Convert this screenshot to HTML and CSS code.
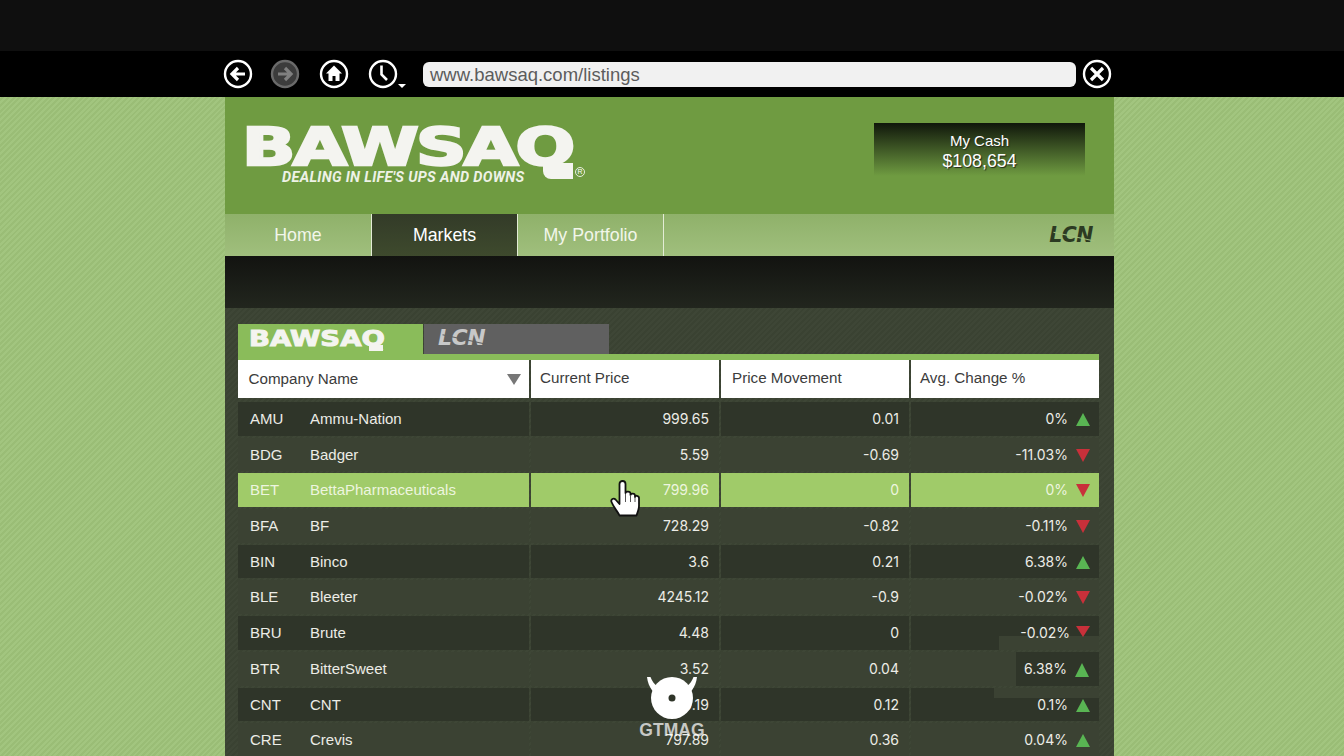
FILE: index.html
```html
<!DOCTYPE html>
<html lang="en">
<head>
    <meta charset="UTF-8">
    <title>BAWSAQ - Listings</title>
    <link rel="stylesheet" href="styles.css">
</head>
<body>
    <div class="top-strip"></div>

    <div class="browser-bar">
        <svg class="tool" width="30" height="30" viewBox="0 0 30 30">
            <circle cx="15" cy="15" r="13" fill="none" stroke="#fff" stroke-width="2.4"/>
            <path d="M22 15H10M15 9l-6 6 6 6" fill="none" stroke="#fff" stroke-width="3.2"/>
        </svg>
        <svg class="tool tool-off" width="30" height="30" viewBox="0 0 30 30">
            <circle cx="15" cy="15" r="13" fill="#3c3c3c" stroke="#6a6a6a" stroke-width="2.4"/>
            <path d="M8 15h12M15 9l6 6-6 6" fill="none" stroke="#808080" stroke-width="3.2"/>
        </svg>
        <svg class="tool tool-home" width="30" height="30" viewBox="0 0 30 30">
            <circle cx="15" cy="15" r="13" fill="none" stroke="#fff" stroke-width="2.4"/>
            <path d="M15 6.500L7 14.500h2.500V22h4v-5h3v5h4v-7.500H23z" fill="#fff"/>
        </svg>
        <svg class="tool tool-clock" width="40" height="34" viewBox="0 0 40 34">
            <circle cx="15" cy="15" r="13" fill="none" stroke="#fff" stroke-width="2.4"/>
            <path d="M13.500 6.500V15.500L19 21" fill="none" stroke="#fff" stroke-width="2.600"/>
            <path d="M30 25h8l-4 4z" fill="#fff"/>
        </svg>
        <div class="url">www.bawsaq.com/listings</div>
        <svg class="tool-close" width="30" height="30" viewBox="0 0 30 30">
            <circle cx="15" cy="15" r="13" fill="none" stroke="#fff" stroke-width="2.4"/>
            <path d="M9 9l12 12M21 9L9 21" fill="none" stroke="#fff" stroke-width="3.2"/>
        </svg>
    </div>

    <div class="page">
        <header class="head">
            <div class="brand">
                <div class="brand-name">BAWSAQ</div>
                <div class="brand-line">DEALING IN LIFE'S UPS AND DOWNS</div>
                <span class="brand-reg">R</span>
            </div>
            <div class="cash">
                <div>My Cash</div>
                <div class="cash-value">$108,654</div>
            </div>
        </header>

        <nav class="nav">
            <a class="nav-item">Home</a>
            <a class="nav-item active">Markets</a>
            <a class="nav-item">My Portfolio</a>
            <span class="lcn nav-lcn">LCN</span>
        </nav>

        <div class="band"></div>

        <main class="market">
            <div class="tabs">
                <div class="tab tab-on"><span class="tab-name">BAWSAQ</span></div>
                <div class="tab tab-off"><span class="lcn">LCN</span></div>
            </div>
            <div class="tab-rule"></div>

            <div class="row head-row">
                <div class="cell name-head">Company Name <span class="sort"></span></div>
                <div class="cell">Current Price</div>
                <div class="cell move-head">Price Movement</div>
                <div class="cell">Avg. Change %</div>
            </div>

            <div class="row dark">
                <div class="cell co"><span class="sym">AMU</span>Ammu-Nation</div>
                <div class="cell num">999.65</div>
                <div class="cell num">0.01</div>
                <div class="cell num">0%<i class="up"></i></div>
            </div>
            <div class="row">
                <div class="cell co"><span class="sym">BDG</span>Badger</div>
                <div class="cell num">5.59</div>
                <div class="cell num">-0.69</div>
                <div class="cell num">-11.03%<i class="down"></i></div>
            </div>
            <div class="row hot">
                <div class="cell co"><span class="sym">BET</span>BettaPharmaceuticals</div>
                <div class="cell num">799.96</div>
                <div class="cell num">0</div>
                <div class="cell num">0%<i class="down"></i></div>
            </div>
            <div class="row">
                <div class="cell co"><span class="sym">BFA</span>BF</div>
                <div class="cell num">728.29</div>
                <div class="cell num">-0.82</div>
                <div class="cell num">-0.11%<i class="down"></i></div>
            </div>
            <div class="row dark">
                <div class="cell co"><span class="sym">BIN</span>Binco</div>
                <div class="cell num">3.6</div>
                <div class="cell num">0.21</div>
                <div class="cell num">6.38%<i class="up"></i></div>
            </div>
            <div class="row">
                <div class="cell co"><span class="sym">BLE</span>Bleeter</div>
                <div class="cell num">4245.12</div>
                <div class="cell num">-0.9</div>
                <div class="cell num">-0.02%<i class="down"></i></div>
            </div>
            <div class="row dark">
                <div class="cell co"><span class="sym">BRU</span>Brute</div>
                <div class="cell num">4.48</div>
                <div class="cell num">0</div>
                <div class="cell num smear-low">-0.02%<i class="down"></i></div>
            </div>
            <div class="row">
                <div class="cell co"><span class="sym">BTR</span>BitterSweet</div>
                <div class="cell num">3.52</div>
                <div class="cell num">0.04</div>
                <div class="cell num smear-dark">6.38%<i class="up"></i></div>
            </div>
            <div class="row dark">
                <div class="cell co"><span class="sym">CNT</span>CNT</div>
                <div class="cell num">0.19</div>
                <div class="cell num">0.12</div>
                <div class="cell num smear-top">0.1%<i class="up"></i></div>
            </div>
            <div class="row">
                <div class="cell co"><span class="sym">CRE</span>Crevis</div>
                <div class="cell num">797.89</div>
                <div class="cell num">0.36</div>
                <div class="cell num">0.04%<i class="up"></i></div>
            </div>

            <svg class="hand" width="30" height="38" viewBox="0 0 30 38">
                <path d="M9.500 4c0-4 6-4 6 0v9c0-2 5-2 5 .5v1.500c0-2 4.500-2 4.500.5v1.500c0-2 4-1.500 4 1v8c0 3-1 5-2.500 9.500H9.500C8 32 4 28 1.500 22c-1-2.500 2-4.500 4-2.500l4 4.500z" fill="#fff" stroke="#111" stroke-width="1.800" stroke-linejoin="round"/>
                <path d="M15.500 14v8M20.500 15v7M25 17v5" fill="none" stroke="#555" stroke-width="1"/>
            </svg>
        </main>
    </div>

    <div class="mark">
        <svg width="50" height="44" viewBox="0 0 50 44">
            <circle cx="25" cy="21" r="21" fill="#fff"/>
            <path d="M0 0h3.500C5 4 7 7 10 9L5.500 14C2.500 10 .5 5 0 0zM50 0h-3.500C45 4 43 7 40 9l4.500 5C47.500 10 49.500 5 50 0z" fill="#fff"/>
            <circle cx="25" cy="21" r="3.500" fill="#2f3529"/>
        </svg>
        <div class="mark-name">GTMAG</div>
    </div>
</body>
</html>
```

FILE: styles.css
```css
* {
    margin: 0;
    padding: 0;
    box-sizing: border-box;
}

html, body {
    height: 756px;
    overflow: hidden;
}

body {
    font-family: "Liberation Sans", Arial, sans-serif;
    color: #fff;
    background: repeating-linear-gradient(135deg, #a2c57f 0 2px, #9abd76 2px 4px);
    position: relative;
}

.top-strip {
    height: 51px;
    background: #0f0f0f;
}

/* browser bar */
.browser-bar {
    height: 46px;
    background: #000;
    padding-left: 223px;
    display: flex;
    align-items: center;
}

.tool {
    flex: none;
    margin-right: 17px;
    width: 30px;
    height: 30px;
}

.tool-off {
    margin-right: 19px;
}

.tool-home {
    margin-right: 19px;
}

.tool-clock {
    width: 40px;
    height: 34px;
    margin-top: 4px;
    margin-right: 15px;
}

.url {
    width: 653px;
    height: 25px;
    line-height: 25px;
    background: #f1f1f1;
    border-radius: 6px;
    color: #5c5c5c;
    font-size: 18.500px;
    padding-left: 7px;
}

.tool-close {
    flex: none;
    margin-left: 6px;
}

/* page column */
.page {
    width: 889px;
    height: 659px;
    margin-left: 225px;
    background: repeating-linear-gradient(135deg, #3e4636 0 2px, #3a4232 2px 4px);
    overflow: hidden;
}

.head {
    height: 117px;
    background: #6f9b41;
    display: flex;
    justify-content: space-between;
    padding: 26px 29px 0 22px;
}

.brand {
    position: relative;
    width: 340px;
}

.brand-name {
    font-family: "DejaVu Sans", sans-serif;
    font-weight: 700;
    font-size: 52px;
    line-height: 40px;
    height: 47px;
    padding-top: 4px;
    margin-left: -5px;
    color: #f4f4f0;
    letter-spacing: -2px;
    -webkit-text-stroke: 2.500px #f4f4f0;
    transform: scaleX(1.35);
    transform-origin: 0 0;
    white-space: nowrap;
}

/* tail of the Q hangs below the wordmark */
.brand::after {
    content: "";
    position: absolute;
    left: 296px;
    top: 40px;
    width: 30px;
    height: 16px;
    background: #f4f4f0;
    border-radius: 0 0 0 8px;
}

.brand-line {
    font-family: Roboto, "Liberation Sans", sans-serif;
    font-size: 14.500px;
    font-weight: 700;
    font-style: italic;
    letter-spacing: 0.3px;
    color: #eef2e6;
    margin-left: 35px;
    line-height: 16px;
    white-space: nowrap;
}

.brand-reg {
    position: absolute;
    left: 328px;
    top: 44px;
    width: 10px;
    height: 10px;
    border: 1px solid #e8eee0;
    border-radius: 50%;
    font-size: 7px;
    line-height: 8px;
    text-align: center;
}

.cash {
    width: 211px;
    height: 53px;
    background: linear-gradient(#10170b, #6f9b41);
    text-align: center;
    font-size: 15px;
    line-height: 20px;
    padding-top: 8px;
    text-shadow: 1px 1px 1px #20281a;
}

.cash-value {
    font-size: 17.800px;
}

/* nav */
.nav {
    height: 42px;
    display: flex;
    align-items: stretch;
    background: linear-gradient(#8fb16a, #a0bf7d);
    position: relative;
}

.nav-item {
    width: 146px;
    text-align: center;
    font-size: 17.800px;
    line-height: 42px;
    color: #f2f6ea;
    border-right: 1px solid #e3ecd5;
}

.nav-item:first-child {
    width: 147px;
}

.nav-item.active {
    background: linear-gradient(#333b28, #3e4a2d);
    color: #fff;
}

/* the LCN wordmark has a thin line slashed through it */
.lcn {
    font-family: "DejaVu Sans", sans-serif;
    font-weight: 700;
    font-style: italic;
    font-size: 20.500px;
    letter-spacing: -0.500px;
    color: #2c3a22;
    position: relative;
    display: inline-block;
}

.lcn::after {
    content: "";
    position: absolute;
    left: 4px;
    right: -2px;
    top: 54%;
    height: 1px;
    background: #a0bf7d;
    transform: rotate(12deg);
}

.nav-lcn {
    position: absolute;
    right: 21px;
    top: 11px;
    line-height: 20px;
}

.band {
    height: 52px;
    background: linear-gradient(#121310, #22261e);
}

/* table */
.market {
    position: relative;
    padding: 16px 15px 0 13px;
}

.tabs {
    display: flex;
    gap: 1px;
    height: 30px;
}

.tab {
    width: 185px;
    padding-left: 11px;
}

.tab-on {
    background: #8abc5a;
    overflow: hidden;
    position: relative;
}

.tab-on::after {
    content: "";
    position: absolute;
    left: 131px;
    top: 21px;
    width: 14px;
    height: 6px;
    background: #f4f4f0;
}

.tab-name {
    display: block;
    font-family: "DejaVu Sans", sans-serif;
    font-weight: 700;
    font-size: 22px;
    line-height: 30px;
    color: #f4f4f0;
    -webkit-text-stroke: 1px #f4f4f0;
    transform: scaleX(1.25);
    transform-origin: 0 0;
    white-space: nowrap;
}

.tab-off {
    background: #606060;
    padding-left: 14px;
    line-height: 28px;
}

.tab-off .lcn {
    font-size: 22px;
    color: #c8c8c8;
}

.tab-off .lcn::after {
    background: #606060;
}

.tab-rule {
    height: 6px;
    background: #8abc5a;
}

.row {
    display: grid;
    grid-template-columns: 291px 188px 188px 188px;
    grid-template-rows: 33.700px;
    column-gap: 2px;
    height: 35.700px;
    padding: 1px 0;
    font-size: 15px;
    color: #ecece6;
}

.cell {
    line-height: 33.700px;
    background-color: #3b4233;
    white-space: nowrap;
    position: relative;
}

.dark .cell {
    background-color: #2f3529;
}

.head-row {
    grid-template-rows: 38px;
    height: 41px;
    padding: 0 0 3px;
    font-size: 15.200px;
    color: #3c3c3c;
}

.head-row .cell {
    background: #fff;
    line-height: 36px;
    padding-left: 9px;
}

.head-row .name-head {
    padding-left: 10.500px;
    line-height: 38px;
}

.head-row .move-head {
    padding-left: 11px;
}

.sort {
    position: absolute;
    right: 8px;
    top: 14px;
    border-left: 7px solid transparent;
    border-right: 7px solid transparent;
    border-top: 11px solid #777;
}

.co {
    padding-left: 12px;
}

.sym {
    display: inline-block;
    width: 60px;
}

/* Inter has the narrow figure 1 of the original face */
.num {
    font-family: Inter, "Liberation Sans", sans-serif;
    font-size: 14px;
    line-height: 34.500px;
    text-align: right;
    padding-right: 10px;
}

.num:last-child {
    padding-right: 31px;
}

.num:last-child i {
    position: absolute;
    right: 9px;
    top: 11px;
    border-left: 7.500px solid transparent;
    border-right: 7.500px solid transparent;
}

i.up {
    border-bottom: 13px solid #59b553;
}

i.down {
    border-top: 13px solid #c8303a;
}

.hot .cell {
    background-color: #a0cb69;
    color: #edf5df;
}

/* compression smears around the last rows of the change column */
.row .smear-low {
    background-image: linear-gradient(#3b4233, #3b4233);
    background-position: right bottom;
    background-size: 100px 14px;
    background-repeat: no-repeat;
    padding-right: 29px;
    line-height: 33.700px;
}

.row .smear-low i {
    top: 10px;
    border-top-width: 11px;
}

.row .smear-dark {
    background-image: linear-gradient(#2f3529, #2f3529);
    background-position: right top;
    background-size: 83px 100%;
    background-repeat: no-repeat;
    padding-right: 32px;
}

.row .smear-dark i {
    top: 11px;
    right: 10px;
    border-bottom-width: 14px;
}

.row .smear-top {
    background-image: linear-gradient(#3b4233, #3b4233);
    background-position: right top;
    background-size: 105px 10px;
    background-repeat: no-repeat;
}

.hand {
    position: absolute;
    left: 385px;
    top: 172px;
}

/* watermark */
.mark {
    position: absolute;
    left: 630px;
    top: 677px;
    width: 84px;
    text-align: center;
    pointer-events: none;
}

.mark svg {
    display: block;
    margin: 0 auto;
}

.mark-name {
    font-size: 17.500px;
    font-weight: 700;
    color: rgba(255, 255, 255, 0.72);
    letter-spacing: 0.1px;
    line-height: 20px;
    margin-top: -1px;
}
```
